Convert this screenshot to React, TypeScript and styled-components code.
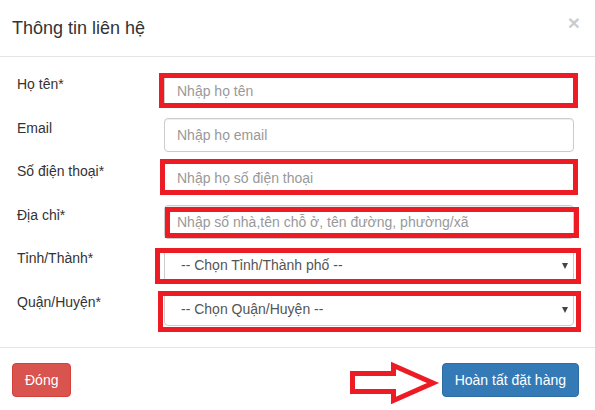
import React from "react";
import styled, { createGlobalStyle } from "styled-components";

const Global = createGlobalStyle`
  html, body { margin: 0; padding: 0; background: #fff; }
  body {
    font-family: "Liberation Sans", Arial, Helvetica, sans-serif;
    font-size: 14px;
    color: #333;
  }
  * { box-sizing: border-box; }
`;

const Modal = styled.div`
  width: 595px;
  height: 410px;
  overflow: hidden;
  background: #fff;
  display: flex;
  flex-direction: column;
`;

const Header = styled.div`
  display: flex;
  align-items: flex-start;
  justify-content: space-between;
  padding: 15px 15px 15px 12px;
  border-bottom: 1px solid #e5e5e5;
`;

const Title = styled.h4`
  margin: 0;
  font-size: 18px;
  font-weight: normal;
  line-height: 26px;
  color: #333;
`;

const Close = styled.button`
  border: 0;
  background: none;
  padding: 0;
  margin-top: -3px;
  font-family: inherit;
  font-size: 21px;
  font-weight: bold;
  line-height: 1;
  color: #000;
  opacity: 0.2;
`;

const Body = styled.div`
  display: flex;
  flex-direction: column;
  gap: 9.6px;
  padding: 17px 21px 21px 17px;
`;

const Row = styled.div`
  display: grid;
  grid-template-columns: 147px 410px;
`;

const Label = styled.label`
  padding-top: 0;
  font-size: 14px;
  line-height: 20px;
  color: #333;
`;

const Field = styled.div`
  position: relative;
  height: 34px;
`;

const Input = styled.input`
  display: block;
  width: 100%;
  height: 34px;
  padding: 6px 12px;
  font-family: inherit;
  font-size: 14px;
  line-height: 20px;
  color: #555;
  background: #fff;
  border: 1px solid #ccc;
  border-radius: 4px;
  box-shadow: inset 0 1px 1px rgba(0, 0, 0, 0.075);
  outline: none;
  &::placeholder { color: #999; }
`;

const Select = styled.select`
  display: block;
  width: 100%;
  height: 34px;
  padding: 6px 24px 6px 16px;
  font-family: inherit;
  font-size: 14px;
  color: #555;
  background: #fff;
  border: 1px solid #ccc;
  border-radius: 4px;
  box-shadow: inset 0 1px 1px rgba(0, 0, 0, 0.075);
  appearance: none;
  -webkit-appearance: none;
  outline: none;
`;

const Caret = styled.span`
  position: absolute;
  right: 6px;
  top: 50%;
  margin-top: -2px;
  width: 0;
  height: 0;
  border-left: 3.5px solid transparent;
  border-right: 3.5px solid transparent;
  border-top: 6px solid #444;
  pointer-events: none;
`;

const Highlight = styled.span<{ $t: number; $r: number; $b: number; $l: number }>`
  position: absolute;
  top: ${(p) => p.$t}px;
  right: ${(p) => p.$r}px;
  bottom: ${(p) => p.$b}px;
  left: ${(p) => p.$l}px;
  border: 5px solid #ed1c24;
  pointer-events: none;
`;

const Footer = styled.div`
  position: relative;
  display: flex;
  justify-content: space-between;
  align-items: flex-start;
  padding: 15px 16px 0 12px;
  border-top: 1px solid #e5e5e5;
`;

const Button = styled.button<{ $variant: "danger" | "primary" }>`
  height: 34px;
  padding: 6px 12px;
  font-family: inherit;
  font-size: 14px;
  line-height: 20px;
  color: #fff;
  border-radius: 4px;
  border: 1px solid ${(p) => (p.$variant === "danger" ? "#d43f3a" : "#2e6da4")};
  background: ${(p) => (p.$variant === "danger" ? "#d9534f" : "#337ab7")};
`;

const Arrow = styled.svg`
  position: absolute;
  left: 348px;
  top: 11px;
  overflow: visible;
`;

type Box = { t: number; r: number; b: number; l: number };

type FieldDef = {
  label: string;
  placeholder: string;
  select?: boolean;
  box?: Box;
};

const fields: FieldDef[] = [
  { label: "Họ tên*", placeholder: "Nhập họ tên", box: { t: -1, r: -4, b: 0, l: -5 } },
  { label: "Email", placeholder: "Nhập họ email" },
  { label: "Số điện thoại*", placeholder: "Nhập họ số điện thoại", box: { t: -2, r: -4, b: 0, l: -4 } },
  { label: "Địa chỉ*", placeholder: "Nhập số nhà,tên chỗ ở, tên đường, phường/xã", box: { t: 2, r: -5, b: 1, l: 1 } },
  { label: "Tỉnh/Thành*", placeholder: "-- Chọn Tỉnh/Thành phố --", select: true, box: { t: 0, r: -7, b: -2, l: -9 } },
  { label: "Quận/Huyện*", placeholder: "-- Chọn Quận/Huyện --", select: true, box: { t: -1, r: -7, b: -6, l: -6 } },
];

export default function App() {
  return (
    <>
      <Global />
      <Modal>
        <Header>
          <Title>Thông tin liên hệ</Title>
          <Close type="button">×</Close>
        </Header>
        <Body>
          {fields.map((f) => (
            <Row key={f.label}>
              <Label>{f.label}</Label>
              <Field>
                {f.select ? (
                  <>
                    <Select defaultValue="">
                      <option value="">{f.placeholder}</option>
                    </Select>
                    <Caret />
                  </>
                ) : (
                  <Input placeholder={f.placeholder} />
                )}
                {f.box && <Highlight $t={f.box.t} $r={f.box.r} $b={f.box.b} $l={f.box.l} />}
              </Field>
            </Row>
          ))}
        </Body>
        <Footer>
          <Button $variant="danger" type="button">Đóng</Button>
          <Arrow width="92" height="48" viewBox="0 0 92 48">
            <polygon
              points="4.5,14.5 45.5,14.5 45.5,6.5 85,24 45.5,41.5 45.5,32.5 4.5,32.5"
              fill="#fff"
              stroke="#ed1c24"
              strokeWidth="5"
            />
          </Arrow>
          <Button $variant="primary" type="button">Hoàn tất đặt hàng</Button>
        </Footer>
      </Modal>
    </>
  );
}
